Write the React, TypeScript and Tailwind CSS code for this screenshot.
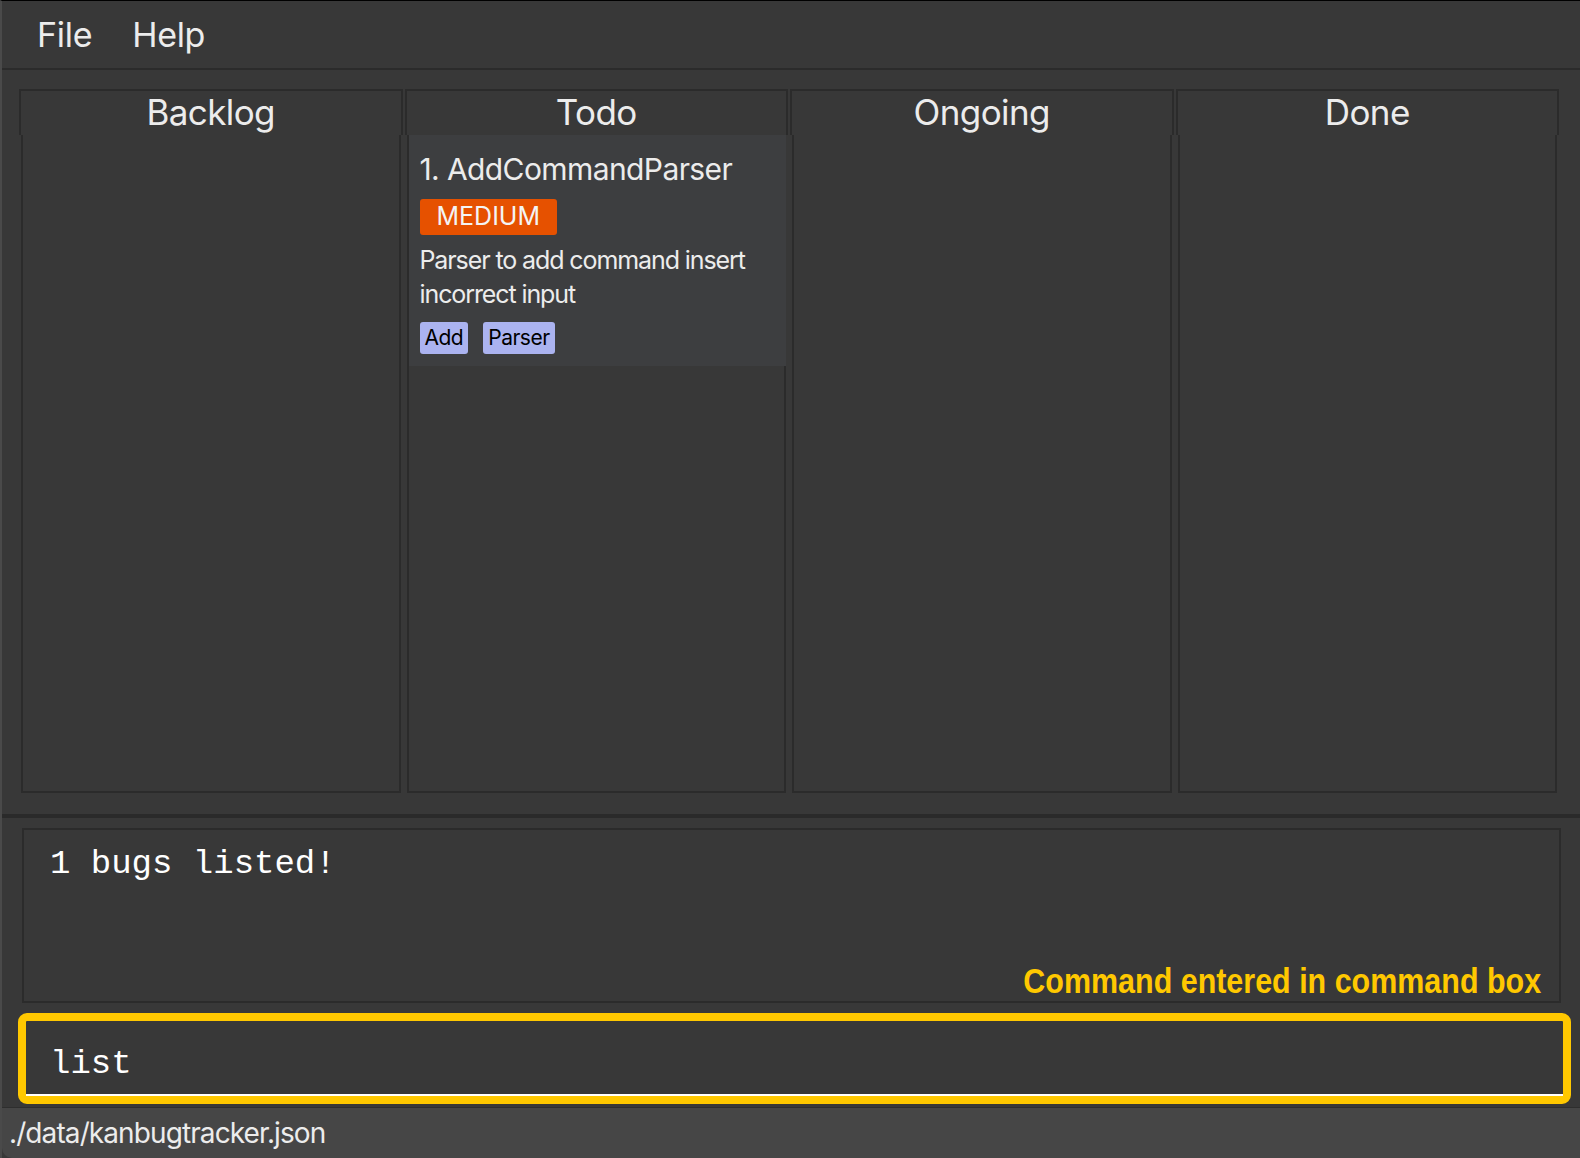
import React from 'react';

const COLUMNS = ['Backlog', 'Todo', 'Ongoing', 'Done'];

const SANS = "font-['Inter','Noto_Sans',sans-serif]";
const MONO = "font-['Liberation_Mono','DejaVu_Sans_Mono',monospace]";

function BugCard() {
  return (
    <div className="-mr-[2px] bg-[#3d3e40] px-[11px] pt-[15px] pb-[12px] text-[#ececec]">
      <div className="text-[30px] leading-[38px] tracking-[-0.6px]">1. AddCommandParser</div>
      <div className="mt-[11px] inline-flex h-[36px] items-center rounded-[3px] bg-[#e65100] px-[17px] text-[25px] text-[#f4f4f4]">
        MEDIUM
      </div>
      <div className="mt-[8px] text-[25px] leading-[34px] tracking-[-1.1px]">
        Parser to add command insert
        <br />
        incorrect input
      </div>
      <div className="mt-[11px] flex gap-[15px]">
        <span className="rounded-[3px] bg-[#abb3f0] px-[5px] text-[21px] leading-[32px] tracking-[-0.5px] text-black">Add</span>
        <span className="rounded-[3px] bg-[#abb3f0] px-[5px] text-[21px] leading-[32px] tracking-[-0.5px] text-black">Parser</span>
      </div>
    </div>
  );
}

export default function App() {
  return (
    <div className={`${SANS} flex h-[1158px] w-[1580px] flex-col overflow-hidden border-t border-l-2 border-t-black border-l-[#4a4a4a] bg-[#383838]`}>
      {/* menu */}
      <div className="flex h-[69px] shrink-0 items-center gap-[40px] border-b-2 border-[#2b2b2b] pl-[35px] text-[34px] tracking-[-0.3px] text-[#ececec]">
        <span>File</span>
        <span>Help</span>
      </div>

      {/* kanban columns */}
      <div className="mt-[19px] ml-[17px] grid h-[704px] w-[1540px] shrink-0 grid-cols-4 gap-[2px]">
        {COLUMNS.map((name) => (
          <div key={name} className="flex min-h-0 flex-col">
            <div className="flex h-[46px] shrink-0 items-start justify-center border-2 border-b-0 border-[#2b2b2b] text-[35px] leading-[42px] tracking-[-0.6px] text-[#ececec]">
              {name}
            </div>
            <div className="mx-[2px] flex-1 border-2 border-t-0 border-[#2b2b2b]">
              {name === 'Todo' && <BugCard />}
            </div>
          </div>
        ))}
      </div>

      <div className="mt-[21px] h-[4px] shrink-0 bg-[#2a2a2a]" />

      {/* result display */}
      <div className="relative mt-[10px] ml-[20px] h-[175px] w-[1539px] shrink-0 border-2 border-[#2b2b2b] px-[26px] pt-[15px]">
        <div className={`${MONO} text-[34px] leading-[38px] text-white`}>1 bugs listed!</div>
        <div className="absolute right-[18px] bottom-[0px] origin-right scale-x-[0.87] font-['Liberation_Sans','Arial',sans-serif] text-[35px] leading-[40px] font-bold text-[#ffc800]">
          Command entered in command box
        </div>
      </div>

      {/* command box */}
      <div className="mt-[10px] ml-[16px] h-[91px] w-[1553px] shrink-0 rounded-[9px] border-[8px] border-[#ffc800] bg-[#383838]">
        <div className="flex h-full flex-col border-b-2 border-white">
          <div className={`${MONO} flex-1 pl-[24px] pt-[23px] text-[34px] leading-[40px] text-white`}>list</div>
        </div>
      </div>

      {/* status bar */}
      <div className="mt-[3px] flex-1 rounded-bl-[10px] border-t border-[#2e2e2e] bg-[#464646] pl-[7px] pt-[5px] text-[28px] leading-[40px] tracking-[-0.9px] text-[#ececec]">
        ./data/kanbugtracker.json
      </div>
    </div>
  );
}
